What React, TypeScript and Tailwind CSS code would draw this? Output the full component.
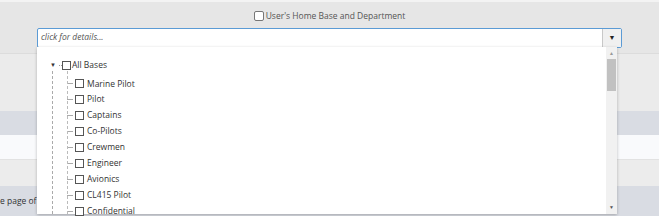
import React from "react";

const ITEMS = [
  "Marine Pilot",
  "Pilot",
  "Captains",
  "Co-Pilots",
  "Crewmen",
  "Engineer",
  "Avionics",
  "CL415 Pilot",
  "Confidential",
];

function Box() {
  return (
    <span className="inline-block w-[9px] h-[9px] border border-[#555] bg-white shrink-0" />
  );
}

export default function App() {
  return (
    <div
      className="relative w-[659px] h-[216px] overflow-hidden bg-[#e6e6e6] text-[#333]"
      style={{ fontFamily: '"Open Sans", "Liberation Sans", sans-serif' }}
    >
      <div className="h-[2px] bg-[#f3f3f3]" />
      <div className="h-[52px] border-b border-[#dcdcdc] pt-[8px]">
        <label className="flex items-center justify-center gap-[2px] text-[8.5px] text-[#555]">
          <span className="inline-block w-[10px] h-[10px] border border-[#777] rounded-[2px] bg-white" />
          User's Home Base and Department
        </label>
        <div className="mx-[37px] mt-[5px] h-[20px] flex border border-[#5b9bd5] rounded-[2px] bg-white">
          <div className="flex-1 flex items-center pl-[3px] text-[8.5px] italic text-[#555]">
            click for details...
          </div>
          <div className="w-[19px] flex items-center justify-center border-l border-[#c8c8c8] bg-[#f0f0f0] text-[7px] text-[#222]">
            ▼
          </div>
        </div>
      </div>
      <div className="h-[57px] bg-[#ebebeb]" />
      <div className="h-[24px] bg-[#d9dce3]" />
      <div className="h-[25px] bg-[#f9fafc] border-b border-[#e2e2e2]" />
      <div className="h-[26px] bg-[#ececec]" />
      <div className="h-[30px] bg-[#d9dce3] flex items-center text-[8.5px] text-[#333]">
        e page of
      </div>

      <div className="absolute left-[37px] top-[47px] w-[580px] h-[167px] bg-white shadow-[0_1px_3px_rgba(0,0,0,0.25)] flex">
        <div className="flex-1 relative pl-[13px] pt-[12px] text-[8.5px] text-[#333]">
          <div className="flex items-center h-[12px]">
            <span className="w-[9px] text-[6px] text-[#333] flex items-center">▼</span>
            <span className="w-[3px] border-t border-dotted border-[#999]" />
            <Box />
            <span className="ml-[1px]">All Bases</span>
          </div>
          <div className="relative ml-[2px] border-l border-dashed border-[#aaa] pl-[12px] pt-[5px]">
            {ITEMS.map((label) => (
              <div key={label} className="relative flex items-center h-[15.9px]">
                <span className="w-[2px]" />
                <span className="w-[6px] border-t border-dashed border-[#aaa] mr-[2px]" />
                <Box />
                <span className="ml-[3px]">{label}</span>
              </div>
            ))}
            <span className="absolute left-[14px] top-0 bottom-0 border-l border-dashed border-[#bbb]" />
          </div>
        </div>
        <div className="w-[11px] bg-[#f1f1f1] flex flex-col items-center">
          <span className="text-[5px] text-[#999] mt-[4px] leading-none">▲</span>
          <span className="mt-[3px] w-[9px] h-[32px] bg-[#c1c1c1]" />
          <span className="flex-1" />
          <span className="text-[5px] text-[#555] mb-[4px] leading-none">▼</span>
        </div>
      </div>
    </div>
  );
}
